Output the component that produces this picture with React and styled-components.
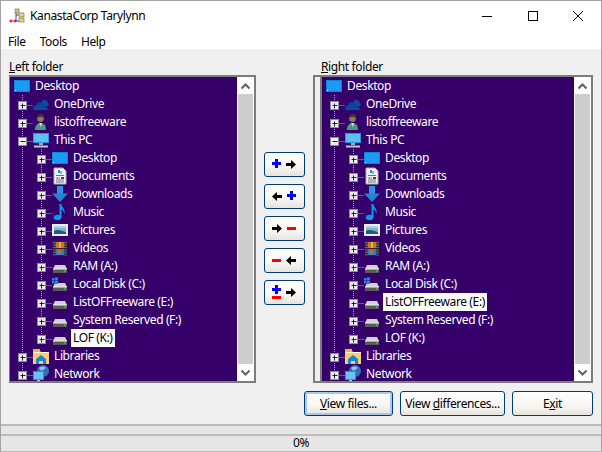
import React from "react";
import styled, { createGlobalStyle } from "styled-components";

const Global = createGlobalStyle`
  html, body { margin: 0; padding: 0; width: 602px; height: 452px; overflow: hidden; background: #f0f0f0; }
  body { font-family: "Noto Sans", "Open Sans", sans-serif; font-size: 12px; color: #000; letter-spacing: -0.38px; }
  * { box-sizing: border-box; }
`;

const Window = styled.div`
  width: 602px; height: 452px; display: flex; flex-direction: column;
  border: 1px solid #a3a3a3; border-bottom: 0; background: #f0f0f0;
`;
const TitleBar = styled.div`
  height: 29px; background: #fff; display: flex; align-items: center; padding-left: 8px;
`;
const TitleText = styled.span`margin-left: 4px; font-size: 12px; line-height: 29px;`;
const WindowButtons = styled.div`margin-left: auto; display: flex;`;
const WinBtn = styled.div`
  width: 45.5px; height: 29px; display: flex; align-items: center; justify-content: center;
`;
const MenuBar = styled.div`
  height: 19px; background: #fff; display: flex; padding-left: 7px; gap: 14px; line-height: 23px;
`;
const MenuItem = styled.span``;
const Main = styled.div`display: flex; padding: 0 8px;`;
const LeftCol = styled.div`width: 247px;`;
const MidCol = styled.div`
  width: 57px; display: flex; flex-direction: column; align-items: center; gap: 7px;
  padding-top: 103px;
`;
const RightCol = styled.div`width: 280px;`;
const FolderLabel = styled.div`
  height: 26px; padding: 9px 0 0 ${p => p.$indent}px; line-height: 18px;
`;
const Under = styled.span`text-decoration: underline; text-underline-offset: 1px;`;
const Frame = styled.div`
  height: 308px; display: flex;
  border-top: 2px solid #7c7c7c; border-bottom: 2px solid #7c7c7c;
  ${p => p.$inset ? "border-left: 2px solid #7c7c7c; padding-left: 5px;" : ""}
`;
const TreeBox = styled.div`
  flex: 1; display: flex; min-width: 0;
  border-left: ${p => p.$inset ? 2 : 1}px solid #7c7c7c;
  border-right: 2px solid #7c7c7c;
`;
const TreeList = styled.div`flex: 1; min-width: 0; background: #36006a; overflow: hidden;`;
const Row = styled.div`height: 18px; display: flex; align-items: stretch; flex: none;`;
const Lines = styled.svg`flex: none; display: block;`;
const RowIcon = styled.svg`flex: none; display: block; margin-right: 3px;`;
const RowLabel = styled.span`
  padding: 0 2px; line-height: 18px; white-space: nowrap;
  color: ${p => p.$selected ? "#000" : "#fff"};
  background: ${p => p.$selected ? "#fff" : "transparent"};
`;
const Scroll = styled.div`
  width: 17px; flex: none; display: flex; flex-direction: column; background: #fff;
`;
const ScrollBtn = styled.div`
  height: 17px; flex: none; display: flex; align-items: center; justify-content: center;
`;
const Thumb = styled.div`flex: 1; margin: 0 1px; background: #cdcdcd;`;
const ActionBtn = styled.button`
  width: 41px; height: 25px; padding: 0; display: flex; align-items: center; justify-content: center;
  border: 1px solid #003c74; border-radius: 3px;
  background: linear-gradient(#ffffff, #f6f5f1 60%, #e6e4dc);
`;
const Footer = styled.div`
  display: flex; justify-content: flex-end; gap: 7px; padding: 8px 8px 0 0;
`;
const FooterBtn = styled.button`
  width: ${p => p.$w}px; height: 25px; padding: 0; font: inherit; color: #000; letter-spacing: inherit;
  border: 1px solid #003c74; border-radius: 3px;
  background: linear-gradient(#ffffff, #f6f5f1 60%, #e6e4dc);
  box-shadow: ${p => p.$focus ? "inset 0 0 0 2px #a9c8f0" : "none"};
`;
const Status = styled.div`margin-top: auto; display: flex; flex-direction: column;`;
const ThinBar = styled.div`
  height: 10px; background: #e6e6e6; border-top: 2px solid #bcbcbc;
`;
const ProgressBar = styled.div`
  height: 18px; background: #e6e6e6; border-top: 2px solid #bcbcbc; border-bottom: 1px solid #bcbcbc;
  text-align: center; line-height: 14px; font-size: 12px;
`;

const Dots = ({ d }) => <path d={d} stroke="#a8a0b8" strokeWidth="1" strokeDasharray="1 1" fill="none" />;

const TreeLines = ({ level, open, lastL1, lastL2 }) => {
  if (level === 0) return <Lines width="4" height="18" />;
  const w = level === 1 ? 23 : 42;
  const bx = level === 1 ? 12.5 : 31.5;
  return (
    <Lines width={w} height="18" viewBox={`0 0 ${w} 18`}>
      <Dots d={lastL1 ? "M12.5 0V11" : "M12.5 0V18"} />
      {level === 2 && <Dots d={lastL2 ? "M31.5 0V11" : "M31.5 0V18"} />}
      <Dots d={`M${bx + 4} 10.5H${w}`} />
      <rect x={bx - 4} y="6.5" width="8" height="8" fill="#ececec" stroke="#8e8e8e" />
      <path d={`M${bx - 2} 10.5H${bx + 3}`} stroke="#1c1c50" />
      {!open && <path d={`M${bx + 0.0} 8.5V13.5`} stroke="#1c1c50" />}
    </Lines>
  );
};

const Svg = ({ children }) => <RowIcon width="16" height="18" viewBox="0 0 16 18">{children}</RowIcon>;

const driveParts = (
  <>
    <path d="M3 8H13L15 12H1Z" fill="#d2d2d2" />
    <rect x="1" y="12" width="14" height="4" fill="#5a5a5a" />
    <rect x="1" y="11.5" width="14" height="1" fill="#f0f0f0" />
    <rect x="12" y="13.5" width="2" height="1" fill="#5fd46a" />
  </>
);

const Icons = {
  monitor: <Svg><rect x="0" y="3" width="16" height="12" fill="#0a86dc" /><rect x="1" y="4" width="14" height="10" fill="#1b9cf2" /><rect x="1" y="13" width="1" height="1" fill="#d8f0ff" /></Svg>,
  cloud: <Svg><path d="M0.5 15C-0.5 12.5 1 10.5 3 10.5C3.5 7.5 6.5 6.5 8 8C9 4.5 13 3.5 14.5 7C15 8 15.5 9 16 10.5L13 12L16 15Z" fill="#0c49a0" /><path d="M3.5 11C4.5 8.5 8 8.5 9 10.5L13 12" stroke="#0a3a86" fill="none" /></Svg>,
  user: <Svg><path d="M2 17C2 12 4.5 10 7.5 10C11 10 13 12 13 17Z" fill="#4a9a7c" /><path d="M6 10L8 14L9 10Z" fill="#d8e4dc" /><circle cx="7.5" cy="5.5" r="3.4" fill="#8a7a5c" /><path d="M4 5C4 2 6 1 8 1C10 1 11 3 11 5C9 3.5 6 3.5 4 5Z" fill="#3f3a2c" /></Svg>,
  pc: <Svg><rect x="0" y="2" width="16" height="10" fill="#2a92d8" /><rect x="1" y="3" width="14" height="8" fill="#5cc0f2" /><rect x="6" y="12" width="4" height="2" fill="#9ab0c0" /><rect x="1" y="14.5" width="14" height="2" fill="#c8c8c8" /></Svg>,
  doc: <Svg><path d="M2 1H11L14 4V17H2Z" fill="#f4f4f4" stroke="#a9a9b4" strokeWidth="1" /><path d="M6 3L8 3V6L6 6Z" fill="#2a86e0" /><path d="M8 4H10V7H8Z" fill="#6cb4ee" /><path d="M4 8.5H12M4 11H8M4 13H12M4 15H12" stroke="#6a7078" /><rect x="9" y="10" width="3" height="2" fill="#445" /></Svg>,
  down: <Svg><rect x="5" y="1" width="6" height="8" fill="#2f93e4" /><path d="M0 8.5H16L8 17Z" fill="#2484d2" /></Svg>,
  music: <Svg><ellipse cx="5.5" cy="14.5" rx="3.8" ry="2.8" fill="#0f93ee" /><rect x="7.5" y="1" width="2" height="14" fill="#0f93ee" /><path d="M9 1C10 4.5 13.5 5.5 12.5 11C12 8 10 6.5 9 6Z" fill="#0f93ee" /></Svg>,
  picture: <Svg><rect x="0" y="3" width="16" height="12" fill="#e6ecf0" /><rect x="2" y="5" width="12" height="8" fill="#7db6da" /><path d="M2 10C5 8 8 9 14 11V13H2Z" fill="#2d5a68" /><rect x="2" y="5" width="12" height="2" fill="#a9d0e8" /></Svg>,
  video: <Svg><rect x="1" y="2" width="14" height="15" fill="#2a2a2e" /><rect x="3.5" y="3" width="9" height="6" fill="#c8752c" /><rect x="3.5" y="10" width="9" height="6" fill="#2f7fd0" /><rect x="7" y="3" width="2" height="6" fill="#e8b040" /><rect x="6" y="11" width="3" height="4" fill="#d06a30" /><path d="M2 3V17M14 3V17" stroke="#aaa" strokeDasharray="1 1.5" /></Svg>,
  drive: <Svg>{driveParts}</Svg>,
  win: <Svg>{driveParts}<path d="M0 3H2.5V5.5H0ZM3 2.5H6V5.5H3ZM0 6H2.5V8.5H0ZM3 6H6V9H3Z" fill="#1490ea" /></Svg>,
  library: <Svg><path d="M0 3H6L8 5H16V17H0Z" fill="#f4cf72" /><rect x="0" y="2" width="7" height="3" fill="#e9b54a" /><rect x="1" y="5" width="15" height="1" fill="#fff4cc" /><path d="M8 8L13 12V17H10V14H6V17H3V12Z" fill="#1a86d8" /></Svg>,
  network: <Svg><circle cx="10" cy="6" r="6" fill="#2f6fb8" /><path d="M6 3C8 1 11 1 13 3C11 4 10 6 8 5.5Z" fill="#9cc4e8" /><rect x="0" y="6" width="11" height="9" fill="#2a92d8" /><rect x="1" y="7" width="9" height="7" fill="#66c4f2" /><rect x="4" y="15" width="3" height="2" fill="#ccc" /></Svg>,
};

const items = [
  [0, "monitor", "Desktop"],
  [1, "cloud", "OneDrive"],
  [1, "user", "listoffreeware"],
  [1, "pc", "This PC", true],
  [2, "monitor", "Desktop"],
  [2, "doc", "Documents"],
  [2, "down", "Downloads"],
  [2, "music", "Music"],
  [2, "picture", "Pictures"],
  [2, "video", "Videos"],
  [2, "drive", "RAM (A:)"],
  [2, "win", "Local Disk (C:)"],
  [2, "drive", "ListOFFreeware (E:)"],
  [2, "drive", "System Reserved (F:)"],
  [2, "drive", "LOF (K:)"],
  [1, "library", "Libraries"],
  [1, "network", "Network"],
];

const Tree = ({ selected, inset }) => (
  <Frame $inset={inset}>
    <TreeBox $inset={inset}>
      <TreeList>
        {items.map(([level, icon, label, open], i) => (
          <Row key={i}>
            <TreeLines level={level} open={open} lastL1={label === "Network"} lastL2={label === "LOF (K:)"} />
            {Icons[icon]}
            <RowLabel $selected={label === selected}>{label}</RowLabel>
          </Row>
        ))}
      </TreeList>
      <Scroll>
        <ScrollBtn>
          <svg width="11" height="8" viewBox="0 0 11 8"><path d="M1.5 6.5L5.5 2.5L9.5 6.5" stroke="#606060" strokeWidth="2" fill="none" /></svg>
        </ScrollBtn>
        <Thumb />
        <ScrollBtn>
          <svg width="11" height="8" viewBox="0 0 11 8"><path d="M1.5 1.5L5.5 5.5L9.5 1.5" stroke="#606060" strokeWidth="2" fill="none" /></svg>
        </ScrollBtn>
      </Scroll>
    </TreeBox>
  </Frame>
);

const Plus = ({ x, y = 2 }) => <path d={`M${x + 3} ${y}h3v3h3v3h-3v3h-3v-3h-3v-3h3z`} fill="#0000ff" />;
const Minus = ({ x, y = 6 }) => <rect x={x} y={y} width="9" height="3" fill="#ff0000" />;
const ArrowR = ({ x, y = 7.5 }) => <path d={`M${x} ${y - 1.5}h5v-3l5 4.5l-5 4.5v-3h-5z`} fill="#000" />;
const ArrowL = ({ x, y = 7.5 }) => <path d={`M${x + 10} ${y - 1.5}h-5v-3l-5 4.5l5 4.5v-3h5z`} fill="#000" />;
const Glyphs = ({ children }) => <svg width="25" height="15" viewBox="0 0 25 15">{children}</svg>;

export default function App() {
  return (
    <Window>
      <Global />
      <TitleBar>
        <svg width="17" height="16" viewBox="0 0 17 16">
          <rect x="6" y="1" width="4" height="4" fill="#d8c27a" stroke="#7a6a30" strokeWidth="0.6" />
          <rect x="10" y="5" width="5" height="4" fill="#e6d48a" stroke="#7a6a30" strokeWidth="0.6" />
          <rect x="10" y="10" width="5" height="4" fill="#e6d48a" stroke="#7a6a30" strokeWidth="0.6" />
          <path d="M7 5V13H10M7 7H10" stroke="#3050b0" fill="none" />
          <path d="M0 13l2.5-2v1.5h3v-1.5l2.5 2l-2.5 2v-1.5h-3v1.5z" fill="#e01010" />
        </svg>
        <TitleText>KanastaCorp Tarylynn</TitleText>
        <WindowButtons>
          <WinBtn>
            <svg width="10" height="10" viewBox="0 0 10 10"><path d="M0 5.5H10" stroke="#000" /></svg>
          </WinBtn>
          <WinBtn>
            <svg width="10" height="10" viewBox="0 0 10 10"><rect x="0.5" y="0.5" width="9" height="9" stroke="#000" fill="none" /></svg>
          </WinBtn>
          <WinBtn>
            <svg width="10" height="10" viewBox="0 0 10 10"><path d="M0 0L10 10M10 0L0 10" stroke="#000" /></svg>
          </WinBtn>
        </WindowButtons>
      </TitleBar>
      <MenuBar>
        <MenuItem>File</MenuItem>
        <MenuItem>Tools</MenuItem>
        <MenuItem>Help</MenuItem>
      </MenuBar>
      <Main>
        <LeftCol>
          <FolderLabel $indent={0}><Under>L</Under>eft folder</FolderLabel>
          <Tree selected="LOF (K:)" />
        </LeftCol>
        <MidCol>
          <ActionBtn><Glyphs><Plus x={0} /><ArrowR x={14} /></Glyphs></ActionBtn>
          <ActionBtn><Glyphs><ArrowL x={0} /><Plus x={15} /></Glyphs></ActionBtn>
          <ActionBtn><Glyphs><ArrowR x={0} /><Minus x={15} /></Glyphs></ActionBtn>
          <ActionBtn><Glyphs><Minus x={0} /><ArrowL x={14} /></Glyphs></ActionBtn>
          <ActionBtn><Glyphs><Plus x={0} y={0} /><Minus x={0} y={11} /><ArrowR x={14} /></Glyphs></ActionBtn>
        </MidCol>
        <RightCol>
          <FolderLabel $indent={8}><Under>R</Under>ight folder</FolderLabel>
          <Tree selected="ListOFFreeware (E:)" inset />
        </RightCol>
      </Main>
      <Footer>
        <FooterBtn $w={89} $focus><Under>V</Under>iew files...</FooterBtn>
        <FooterBtn $w={105}>View <Under>d</Under>ifferences...</FooterBtn>
        <FooterBtn $w={81}>E<Under>x</Under>it</FooterBtn>
      </Footer>
      <Status>
        <ThinBar />
        <ProgressBar>0%</ProgressBar>
      </Status>
    </Window>
  );
}
